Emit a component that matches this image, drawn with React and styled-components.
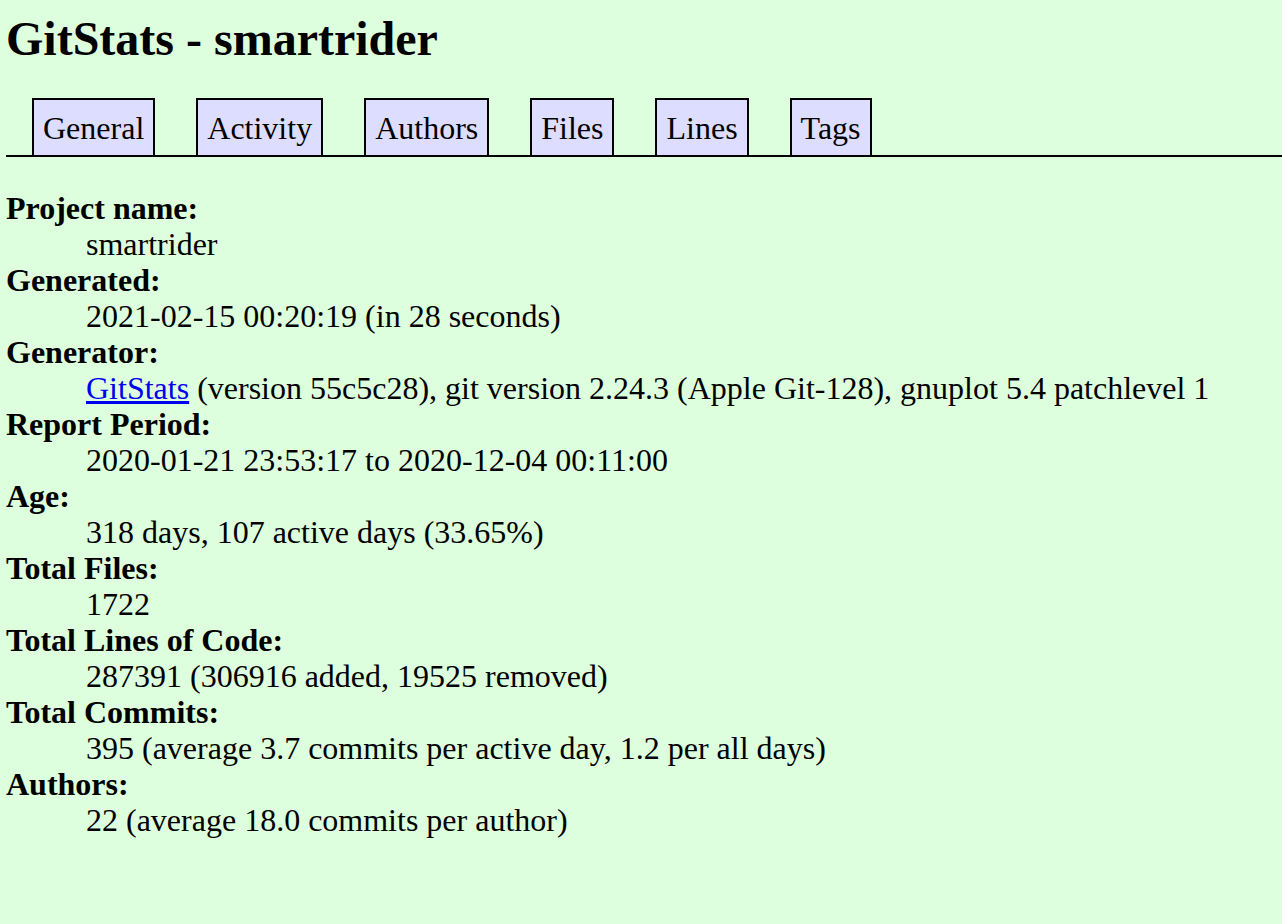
import React from 'react';
import styled, { createGlobalStyle } from 'styled-components';

const GlobalStyle = createGlobalStyle`
  html, body {
    margin: 0;
    padding: 0;
    background-color: #dfd;
  }
  body {
    color: black;
    font-family: 'Liberation Serif', 'Times New Roman', serif;
    font-size: 32px;
    line-height: 36px;
  }
`;

const Page = styled.div`
  padding: 0 0 40px 6px;
  min-height: 884px;
`;

const Title = styled.h1`
  font-size: 48px;
  line-height: 55px;
  font-weight: bold;
  margin: 11px 0 32px 0;
`;

const Nav = styled.ul`
  display: flex;
  align-items: flex-end;
  gap: 41px;
  list-style: none;
  margin: 0;
  padding: 0 0 0 26px;
  border-bottom: 2px solid black;
`;

const Tab = styled.li`
  display: block;
  padding: 10px 9px 9px 9px;
  border: 2px solid black;
  border-bottom: none;
  background-color: #ddf;
  line-height: 36px;
`;

const Details = styled.dl`
  margin: 33px 0 0 0;
`;

const Term = styled.dt`
  font-weight: bold;
  &::after {
    content: ':';
  }
`;

const Value = styled.dd`
  margin: 0 0 0 80px;
`;

const Link = styled.a`
  color: #0000ee;
  text-decoration: underline;
`;

const tabs = ['General', 'Activity', 'Authors', 'Files', 'Lines', 'Tags'];

const rows = [
  ['Project name', 'smartrider'],
  ['Generated', '2021-02-15 00:20:19 (in 28 seconds)'],
  [
    'Generator',
    <>
      <Link href="#">GitStats</Link> (version 55c5c28), git version 2.24.3
      (Apple Git-128), gnuplot 5.4 patchlevel 1
    </>,
  ],
  ['Report Period', '2020-01-21 23:53:17 to 2020-12-04 00:11:00'],
  ['Age', '318 days, 107 active days (33.65%)'],
  ['Total Files', '1722'],
  ['Total Lines of Code', '287391 (306916 added, 19525 removed)'],
  ['Total Commits', '395 (average 3.7 commits per active day, 1.2 per all days)'],
  ['Authors', '22 (average 18.0 commits per author)'],
];

export default function App() {
  return (
    <>
      <GlobalStyle />
      <Page>
        <Title>GitStats - smartrider</Title>
        <Nav>
          {tabs.map((t) => (
            <Tab key={t}>{t}</Tab>
          ))}
        </Nav>
        <Details>
          {rows.map(([term, value]) => (
            <React.Fragment key={term}>
              <Term>{term}</Term>
              <Value>{value}</Value>
            </React.Fragment>
          ))}
        </Details>
      </Page>
    </>
  );
}
